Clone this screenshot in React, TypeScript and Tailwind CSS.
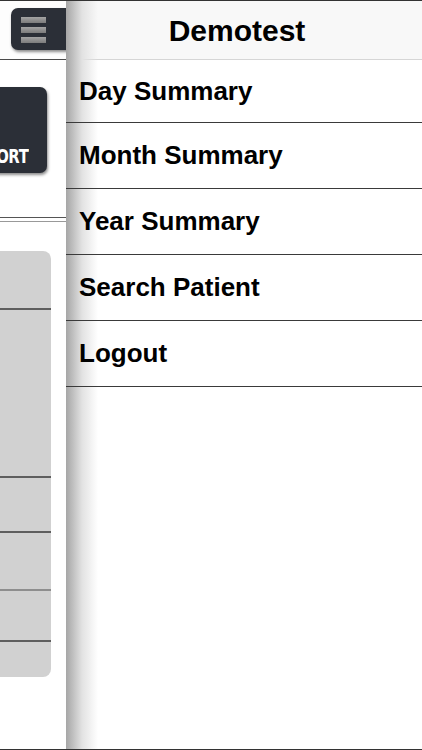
const menuItems = ["Day Summary", "Month Summary", "Year Summary", "Search Patient", "Logout"];

// Underlying screen that peeks out on the left of the drawer
function BackScreen() {
  return (
    <div className="flex w-[66px] shrink-0 flex-col overflow-hidden bg-white">
      <div className="flex h-[59px] shrink-0 border-b border-[#4a4a4a] bg-[#fdfdfd]">
        <div className="ml-[11px] mt-[7px] flex h-[42px] w-[70px] shrink-0 flex-col gap-[4px] rounded-[7px] bg-[#2b2f37] pl-[10px] pt-[9px] shadow-[1px_2px_3px_rgba(0,0,0,0.45)]">
          <div className="h-[6px] w-[25px] bg-gradient-to-b from-[#a4a4a4] to-[#7c7c7c]" />
          <div className="h-[6px] w-[25px] bg-gradient-to-b from-[#a4a4a4] to-[#7c7c7c]" />
          <div className="h-[6px] w-[25px] bg-gradient-to-b from-[#a4a4a4] to-[#7c7c7c]" />
        </div>
      </div>

      <div className="ml-[-50px] mt-[27px] flex h-[86px] w-[97px] shrink-0 items-end justify-end rounded-[7px] bg-[#2b2f37] pb-[5px] pr-[19px] shadow-[1px_2px_3px_rgba(0,0,0,0.45)]">
        <span className="origin-right scale-x-[0.78] font-['DejaVu_Sans','Liberation_Sans',sans-serif] text-[19px] font-bold leading-[24px] tracking-[-0.5px] text-white">
          REPORT
        </span>
      </div>

      <div className="mt-[44px] h-px shrink-0 bg-[#555]" />
      <div className="mt-[3px] h-px shrink-0 bg-[#999]" />

      <div className="ml-[-20px] mt-[29px] flex h-[426px] w-[71px] shrink-0 flex-col rounded-[8px] bg-[#d1d1d1]">
        <div className="h-[59px] shrink-0 border-b-2 border-[#5e5e5e]" />
        <div className="h-[168px] shrink-0 border-b-2 border-[#5e5e5e]" />
        <div className="h-[55px] shrink-0 border-b-2 border-[#5e5e5e]" />
        <div className="h-[58px] shrink-0 border-b-2 border-[#8e8e8e]" />
        <div className="h-[51px] shrink-0 border-b-2 border-[#5e5e5e]" />
      </div>
    </div>
  );
}

function Drawer() {
  return (
    <div className="relative flex flex-1 flex-col bg-white">
      <div className="flex h-[59px] shrink-0 items-center justify-center border-b border-[#d6d6d6] bg-[#f8f8f8] pr-[14px]">
        <h1 className="relative z-10 text-[30px] font-bold text-black">Demotest</h1>
      </div>
      {menuItems.map((item, index) => (
        <div
          key={item}
          className={`relative z-10 flex shrink-0 items-center border-b border-[#3a3a3a] pl-[13px] ${
            index === 0 ? "h-[63px]" : "h-[66px]"
          }`}
        >
          <span className="text-[26px] font-bold text-black">{item}</span>
        </div>
      ))}
      {/* shadow cast by the drawer on its left edge, kept under texts and rules */}
      <div className="pointer-events-none absolute bottom-0 left-0 top-0 z-[5] w-[32px] bg-gradient-to-r from-[#a6a6a6] via-[#e2e2e2] to-transparent" />
    </div>
  );
}

export default function App() {
  return (
    <div className="flex h-[750px] w-[422px] overflow-hidden border-y border-[#333] bg-white font-['Liberation_Sans',Arial,sans-serif]">
      <BackScreen />
      <Drawer />
    </div>
  );
}
